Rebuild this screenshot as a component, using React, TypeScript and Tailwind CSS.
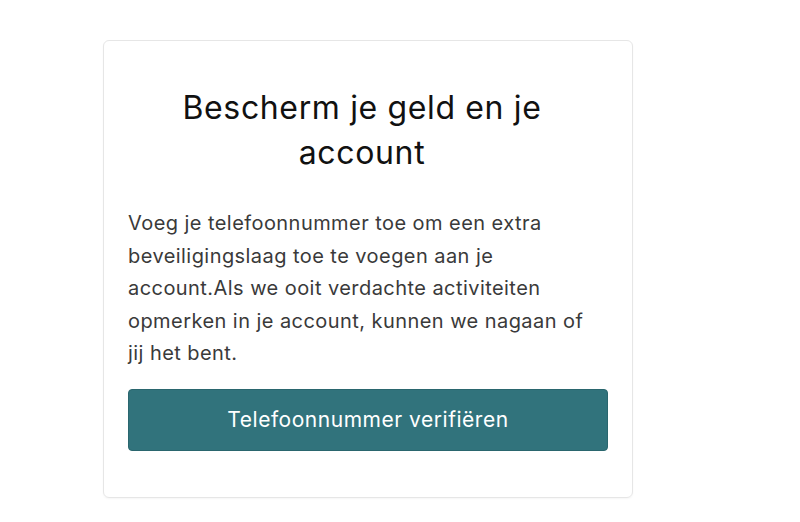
export default function App() {
  return (
    <div className="min-h-[522px] bg-white" style={{ fontFamily: "Inter, 'Noto Sans', sans-serif" }}>
      <div className="ml-[103px] pt-[40px]">
        <section className="w-[530px] rounded-md border border-[#e6e6e6] px-[24px] pb-[46px] pt-[44px] shadow-[0_1px_2px_rgba(0,0,0,0.04)]">
          <h1 className="mx-auto w-[440px] pr-[12px] text-center text-[32px] leading-[45px] font-normal tracking-[0.02em] text-[#111]">
            Bescherm je geld en je account
          </h1>
          <p className="mt-[32px] pr-[20px] text-[20px] leading-[32.5px] tracking-[0.022em] text-[#3a3a3a]">
            Voeg je telefoonnummer toe om een extra beveiligingslaag toe te voegen aan je account.Als we ooit
            verdachte activiteiten opmerken in je account, kunnen we nagaan of jij het bent.
          </p>
          <button
            type="button"
            className="mt-[19px] flex h-[62px] w-full items-center justify-center rounded-[4px] border border-[#2a666e] bg-[#31737c] text-[21px] tracking-[0.025em] text-white"
          >
            Telefoonnummer verifiëren
          </button>
        </section>
      </div>
    </div>
  );
}
